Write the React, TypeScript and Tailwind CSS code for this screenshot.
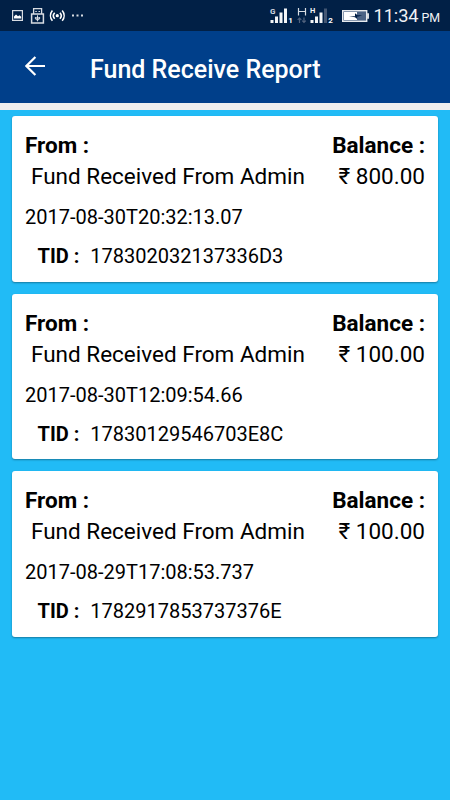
const funds = [
  {
    from: "Fund Received From Admin",
    balance: "800.00",
    date: "2017-08-30T20:32:13.07",
    tid: "178302032137336D3",
  },
  {
    from: "Fund Received From Admin",
    balance: "100.00",
    date: "2017-08-30T12:09:54.66",
    tid: "17830129546703E8C",
  },
  {
    from: "Fund Received From Admin",
    balance: "100.00",
    date: "2017-08-29T17:08:53.737",
    tid: "1782917853737376E",
  },
];

function NotificationIcons() {
  return (
    <svg width="90" height="31" viewBox="0 0 90 31" fill="none">
      {/* screenshot */}
      <rect x="12.6" y="10.6" width="9.8" height="9.8" stroke="#d8dce2" strokeWidth="1.2" />
      <path d="M14 18.6v-2l2-2 2 1.6 1.5-1 1.7 1.6v1.8z" fill="#fff" />
      {/* usb */}
      <path d="M33.6 14V8.6h8V14" stroke="#d8dce2" strokeWidth="1.3" />
      <path d="M35.3 11.5h1.5M38.5 11.5H40" stroke="#d8dce2" strokeWidth="1.2" />
      <rect x="31.6" y="14" width="11.8" height="9" stroke="#d8dce2" strokeWidth="1.5" />
      <path d="M37.5 15.3v6M35.4 17v2l2.1 1.3 2.1-1.3v-2" stroke="#d8dce2" />
      <circle cx="37.5" cy="18" r="1.3" fill="#d8dce2" />
      {/* hotspot */}
      <circle cx="57.3" cy="15.7" r="1.6" fill="#fff" />
      <path
        d="M54.7 12.7c-1.7 1.8-1.7 4.2 0 6M59.9 12.7c1.7 1.8 1.7 4.2 0 6M52.4 10.6c-2.5 3-2.5 7.2 0 10.2M62.2 10.6c2.5 3 2.5 7.2 0 10.2"
        stroke="#fff"
        strokeWidth="1.6"
      />
      {/* more */}
      <path d="M72 14.6h2v2h-2zM76.5 14.6h2v2h-2zM81 14.6h2v2h-2z" fill="#d8dce2" />
    </svg>
  );
}

function SignalIcons() {
  return (
    <svg width="104" height="31" viewBox="266 0 104 31" className="shrink-0 font-[Roboto,sans-serif]">
      <text x="270" y="14" fontSize="8" fontWeight="700" fill="#d8dce2">G</text>
      <g fill="#f3f5f7">
        <rect x="270.5" y="20" width="3" height="3" />
        <rect x="275" y="16.5" width="3" height="6.5" />
        <rect x="279.5" y="12.5" width="3" height="10.5" />
        <rect x="284" y="8.5" width="3" height="14.5" />
      </g>
      <text x="288.3" y="23" fontSize="8" fontWeight="700" fill="#fff">1</text>
      <path d="M298.5 8v7.5M305.5 8v7.5M298.5 11.5h7" fill="none" stroke="#d8dce2" strokeWidth="1.2" />
      <path d="M299.5 23v-5m-1.8 1.8 1.8-1.8 1.8 1.8M304 17.5v5m-1.8-1.8 1.8 1.8 1.8-1.8" fill="none" stroke="#51627d" strokeWidth="1.2" />
      <text x="310" y="13" fontSize="7.5" fontWeight="700" fill="#f3f5f7">H</text>
      <g fill="#f3f5f7">
        <rect x="310.5" y="20" width="3" height="3" />
        <rect x="315" y="16.5" width="3" height="6.5" />
        <rect x="319.5" y="12.5" width="3" height="10.5" />
        <rect x="324" y="8.5" width="3" height="14.5" fill="#435672" />
      </g>
      <text x="328.3" y="23" fontSize="8" fontWeight="700" fill="#fff">2</text>
      {/* battery */}
      <rect x="342.7" y="10.7" width="24" height="10.6" fill="#4b6385" stroke="#e7eaee" strokeWidth="1.4" />
      <path d="M344 12h13v8h-13z" fill="#fff" />
      <path d="M367 13.3h2v5.4h-2z" fill="#d8dce2" />
      <path d="M349 16.3h6v-3.1l2.6 2.1h4.6l-3.6 1.2h-1.4v2.6l-2.2-1.8z" fill="#021f45" />
    </svg>
  );
}

export default function App() {
  return (
    <div className="flex h-[800px] w-[450px] flex-col overflow-hidden bg-[#21bbf6] font-[Roboto,sans-serif] text-black">
      <div className="flex h-[31px] shrink-0 items-center bg-[#012046] text-white">
        <NotificationIcons />
        <div className="ml-auto flex w-[184px] items-center">
          <SignalIcons />
          <span className="ml-[3.5px] flex items-baseline whitespace-nowrap pt-[3px] text-[18.3px] leading-[28px] tracking-[-0.1px] text-[#f0f2f5]">
            11:34<span className="ml-[3px] text-[12.4px]">PM</span>
          </span>
        </div>
      </div>

      <header className="flex h-[72px] shrink-0 items-center bg-[#003f8a] text-white">
        <svg width="20" height="20" viewBox="0 0 20 20" fill="none" className="mb-[2px] ml-[25px]">
          <path d="M20 10H2M10.4 1 1.4 10l9 9" stroke="currentColor" strokeWidth="2.2" />
        </svg>
        <h1 className="ml-[45px] mt-[6px] text-[25px] font-medium leading-8">Fund Receive Report</h1>
      </header>
      <div className="h-[7px] shrink-0 bg-[#eeeeee]" />

      <main className="flex flex-col gap-3 px-3 pt-[6px]">
        {funds.map((fund) => (
          <div
            key={fund.tid}
            className="h-[165.5px] rounded-[3px] bg-white px-[13px] pt-[14px] shadow-[0_1px_2px_rgba(0,0,0,0.35)]"
          >
            <div className="flex justify-between text-[22.5px] font-bold leading-[30px]">
              <span>From :</span>
              <span>Balance :</span>
            </div>
            <div className="mt-px flex justify-between text-[22.5px] leading-[30px]">
              <span className="pl-[6px]">{fund.from}</span>
              <span>₹ {fund.balance}</span>
            </div>
            <div className="mt-[14px] text-[20px] leading-6">{fund.date}</div>
            <div className="mt-[15px] flex pl-[12.5px] text-[20px] leading-6">
              <span className="font-bold">TID :</span>
              <span className="ml-[11px]">{fund.tid}</span>
            </div>
          </div>
        ))}
      </main>
    </div>
  );
}
